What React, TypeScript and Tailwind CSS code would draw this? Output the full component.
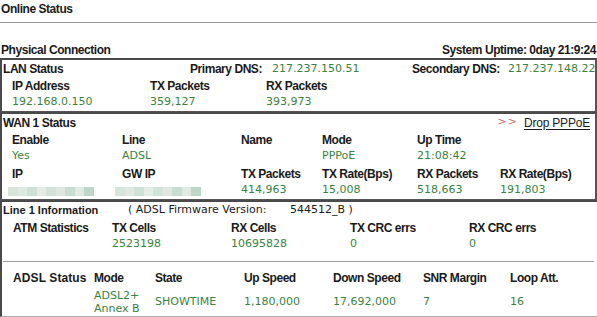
import React from "react";

const L = "font-['Liberation_Sans',Arial,sans-serif] font-bold text-[12px] tracking-[-0.45px] text-[#1a1a1a] whitespace-nowrap";
const V = "font-['DejaVu_Sans',Verdana,sans-serif] text-[11px] text-[#3b823f] whitespace-nowrap";

function Blur() {
  const cols = [
    "bg-[#d6e4dc]", "bg-[#dfe9e3]", "bg-[#cfe0d6]", "bg-[#e3ece7]", "bg-[#d3e2d9]",
    "bg-[#dce8e1]", "bg-[#c9dcd1]", "bg-[#e0eae4]", "bg-[#bed6c9]",
  ];
  return (
    <div className="flex h-[9px] mt-[2px]">
      {cols.map((c, i) => (
        <div key={i} className={`${c} w-[9.5px] h-full`} />
      ))}
    </div>
  );
}

export default function App() {
  return (
    <div className="w-[597px] h-[317px] bg-white overflow-hidden relative">
      <div className={`${L} h-[22px] pl-[1px] pt-[2px] leading-[14px]`}>Online Status</div>
      <div className="h-px bg-[#9a9a9a]" />
      <div className="h-[19px]" />
      <div className="h-[16px] flex items-center justify-between pl-[1px] pr-[1px]">
        <span className={`${L} leading-[16px]`}>Physical Connection</span>
        <span className={`${L} leading-[16px]`}>System Uptime: 0day 21:9:24</span>
      </div>

      {/* LAN */}
      <div className="border-t-2 border-l-2 border-r-2 border-b border-t-[#4a4a4a] border-l-[#4a4a4a] border-r-[#555] border-b-[#555]">
        <div className="h-[17px] grid grid-cols-[187px_82px_140px_96px_1fr] pl-[1px] items-center">
          <span className={L}>LAN Status</span>
          <span className={L}>Primary DNS:</span>
          <span className={V}>217.237.150.51</span>
          <span className={L}>Secondary DNS:</span>
          <span className={V}>217.237.148.22</span>
        </div>
        <div className="h-[17px] grid grid-cols-[138px_116px_1fr] pl-[10px] items-center">
          <span className={L}>IP Address</span>
          <span className={L}>TX Packets</span>
          <span className={L}>RX Packets</span>
        </div>
        <div className="h-[17px] grid grid-cols-[138px_116px_1fr] pl-[10px] items-center">
          <span className={V}>192.168.0.150</span>
          <span className={V}>359,127</span>
          <span className={V}>393,973</span>
        </div>
      </div>

      {/* WAN */}
      <div className="border-t-2 border-l-2 border-r-2 border-b border-t-[#4a4a4a] border-l-[#4a4a4a] border-r-[#555] border-b-[#555]">
        <div className="h-[17px] flex items-center justify-between pl-[1px] pr-[5px]">
          <span className={L}>WAN 1 Status</span>
          <span className="flex items-center gap-[6px]">
            <span className="font-['DejaVu_Sans',Verdana,sans-serif] text-[11px] text-[#d06a6a] tracking-[1px]">&gt;&gt;</span>
            <span className="font-['Liberation_Sans',Arial,sans-serif] text-[12px] tracking-[-0.2px] text-[#1a1a1a] underline underline-offset-2">Drop PPPoE</span>
          </span>
        </div>
        <div className="h-[17px] grid grid-cols-[110px_119px_81px_95px_83px_1fr] pl-[10px] items-center">
          <span className={L}>Enable</span>
          <span className={L}>Line</span>
          <span className={L}>Name</span>
          <span className={L}>Mode</span>
          <span className={L}>Up Time</span>
          <span />
        </div>
        <div className="h-[17px] grid grid-cols-[110px_119px_81px_95px_83px_1fr] pl-[10px] items-center">
          <span className={V}>Yes</span>
          <span className={V}>ADSL</span>
          <span className={V}></span>
          <span className={V}>PPPoE</span>
          <span className={V}>21:08:42</span>
          <span />
        </div>
        <div className="h-[17px] grid grid-cols-[110px_119px_81px_95px_83px_1fr] pl-[10px] items-center">
          <span className={L}>IP</span>
          <span className={L}>GW IP</span>
          <span className={L}>TX Packets</span>
          <span className={L}>TX Rate(Bps)</span>
          <span className={L}>RX Packets</span>
          <span className={L}>RX Rate(Bps)</span>
        </div>
        <div className="h-[17px] grid grid-cols-[110px_119px_81px_95px_83px_1fr] pl-[6px] items-center">
          <Blur />
          <div className="-ml-[3px]"><Blur /></div>
          <span className={`${V} pl-[4px]`}>414,963</span>
          <span className={`${V} pl-[4px]`}>15,008</span>
          <span className={`${V} pl-[4px]`}>518,663</span>
          <span className={`${V} pl-[4px]`}>191,803</span>
        </div>
      </div>

      {/* Line 1 */}
      <div className="border-t-2 border-l-2 border-b border-t-[#4a4a4a] border-l-[#4a4a4a] border-b-[#ababab]">
        <div className="h-[17px] flex items-center pl-[1px]">
          <span className="font-['Liberation_Sans',Arial,sans-serif] font-bold text-[11px] text-[#1a1a1a] whitespace-nowrap w-[125px]">Line 1 Information</span>
          <span className="font-['DejaVu_Sans',Verdana,sans-serif] text-[11px] text-[#1a1a1a] whitespace-nowrap w-[162px]">( ADSL Firmware Version:</span>
          <span className="font-['DejaVu_Sans',Verdana,sans-serif] text-[11px] text-[#1a1a1a] whitespace-nowrap">544512_B )</span>
        </div>
        <div className="h-[17px] grid grid-cols-[99px_119px_119px_119px_1fr] pl-[11px] items-center">
          <span className={L}>ATM Statistics</span>
          <span className={L}>TX Cells</span>
          <span className={L}>RX Cells</span>
          <span className={L}>TX CRC errs</span>
          <span className={L}>RX CRC errs</span>
        </div>
        <div className="h-[17px] grid grid-cols-[99px_119px_119px_119px_1fr] pl-[11px] items-center">
          <span />
          <span className={V}>2523198</span>
          <span className={V}>10695828</span>
          <span className={V}>0</span>
          <span className={V}>0</span>
        </div>
        <div className="h-[8px]" />
        <div className="h-px bg-[#9c9c9c] ml-[1px] mr-[3px]" />
        <div className="h-[7px]" />
        <div className="h-[17px] grid grid-cols-[81px_61px_89px_89px_90px_87px_1fr] pl-[11px] items-center">
          <span className={`${L} tracking-[0.1px]`}>ADSL Status</span>
          <span className={L}>Mode</span>
          <span className={L}>State</span>
          <span className={L}>Up Speed</span>
          <span className={L}>Down Speed</span>
          <span className={L}>SNR Margin</span>
          <span className={L}>Loop Att.</span>
        </div>
        <div className="h-[30px] pt-[2px] grid grid-cols-[81px_61px_89px_89px_90px_87px_1fr] pl-[11px] items-center">
          <span />
          <span className={`${V} leading-[13px] flex flex-col`}>
            <span>ADSL2+</span>
            <span>Annex B</span>
          </span>
          <span className={V}>SHOWTIME</span>
          <span className={V}>1,180,000</span>
          <span className={V}>17,692,000</span>
          <span className={V}>7</span>
          <span className={V}>16</span>
        </div>
      </div>
    </div>
  );
}
